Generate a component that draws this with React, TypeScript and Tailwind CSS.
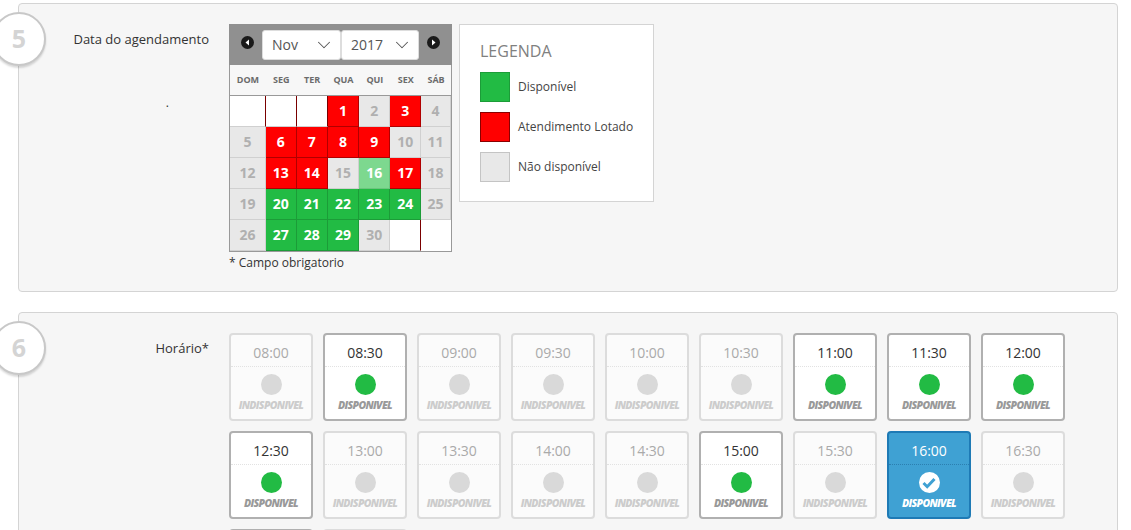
import React from 'react';
import { ChevronDown } from 'lucide-react';

type Day = { n?: number; s: 'e' | 'x' | 'n' | 'r' | 'g' | 'l' };

const weekDays = ['DOM', 'SEG', 'TER', 'QUA', 'QUI', 'SEX', 'SÁB'];
const colWidths = ['w-[36px]', 'w-[31px]', 'w-[31px]', 'w-[32px]', 'w-[31px]', 'w-[31px]', 'w-[30px]'];

const weeks: Day[][] = [
  [{ s: 'e' }, { s: 'e' }, { s: 'e' }, { n: 1, s: 'r' }, { n: 2, s: 'n' }, { n: 3, s: 'r' }, { n: 4, s: 'n' }],
  [{ n: 5, s: 'n' }, { n: 6, s: 'r' }, { n: 7, s: 'r' }, { n: 8, s: 'r' }, { n: 9, s: 'r' }, { n: 10, s: 'n' }, { n: 11, s: 'n' }],
  [{ n: 12, s: 'n' }, { n: 13, s: 'r' }, { n: 14, s: 'r' }, { n: 15, s: 'n' }, { n: 16, s: 'l' }, { n: 17, s: 'r' }, { n: 18, s: 'n' }],
  [{ n: 19, s: 'n' }, { n: 20, s: 'g' }, { n: 21, s: 'g' }, { n: 22, s: 'g' }, { n: 23, s: 'g' }, { n: 24, s: 'g' }, { n: 25, s: 'n' }],
  [{ n: 26, s: 'n' }, { n: 27, s: 'g' }, { n: 28, s: 'g' }, { n: 29, s: 'g' }, { n: 30, s: 'n' }, { s: 'e' }, { s: 'x' }],
];

const dayClass = {
  e: 'bg-white border-r border-r-[#7a0000] border-b border-b-[#d0d0d0]',
  x: 'bg-white',
  n: 'bg-[#e8e8e8] text-[#b0b0b0] border-r border-b border-[#d0d0d0]',
  r: 'bg-[#ff0000] text-white border-r border-b border-[#b00000]',
  g: 'bg-[#22bb44] text-white border-r border-b border-[#1c9c38]',
  l: 'bg-[#7dd88f] text-white border-r border-b border-[#6cc47e]',
};

const row1 = [
  ['08:00', 0], ['08:30', 1], ['09:00', 0], ['09:30', 0], ['10:00', 0], ['10:30', 0], ['11:00', 1], ['11:30', 1], ['12:00', 1],
] as [string, number][];
const row2 = [
  ['12:30', 1], ['13:00', 0], ['13:30', 0], ['14:00', 0], ['14:30', 0], ['15:00', 1], ['15:30', 0], ['16:00', 2], ['16:30', 0],
] as [string, number][];

const StepBadge = ({ n }: { n: number }) => (
  <div className="absolute left-[-27px] top-[8px] w-[54px] h-[54px] rounded-full bg-white border-2 border-[#c8c8c8] shadow-[0_2px_2px_rgba(0,0,0,0.15)] flex items-center justify-center text-[25px] font-bold text-[#d4d4d4]">
    {n}
  </div>
);

const SelectBox = ({ label, width }: { label: string; width: string }) => (
  <div className={`${width} h-[30px] bg-white rounded-[3px] border border-[#dddddd] flex items-center justify-between pl-[9px] pr-[5px] text-[14px] text-[#555555]`}>
    <span>{label}</span>
    <ChevronDown size={22} strokeWidth={1.1} />
  </div>
);

const NavArrow = ({ dir }: { dir: 'l' | 'r' }) => (
  <svg className="mb-[4px]" width="13" height="13" viewBox="0 0 13 13">
    <circle cx="6.5" cy="6.5" r="6.5" fill="#1a1a1a" />
    <path d={dir === 'l' ? 'M8 3.5v6L4.5 6.5z' : 'M5 3.5v6l3.5-3z'} fill="#ffffff" />
  </svg>
);

const Calendar = () => (
  <div className="w-[223px]">
    <div className="h-[41px] bg-[#909090] flex items-center justify-between px-[12px]">
      <NavArrow dir="l" />
      <div className="flex">
        <SelectBox label="Nov" width="w-[79px]" />
        <SelectBox label="2017" width="w-[78px]" />
      </div>
      <NavArrow dir="r" />
    </div>
    <div className="border-x border-b border-[#999999] bg-white">
      <div className="flex h-[31px] bg-[#f7f7f7] border-b border-[#999999]">
        {weekDays.map((d, i) => (
          <div key={d} className={`${colWidths[i]} flex items-center justify-center text-[9px] font-bold text-[#6b6b6b]`}>{d}</div>
        ))}
      </div>
      {weeks.map((w, i) => (
        <div key={i} className="flex h-[31px]">
          {w.map((d, j) => (
            <div key={j} className={`${colWidths[j]} ${dayClass[d.s]} pb-[1px] flex items-center justify-center text-[14px] font-bold`}>{d.n}</div>
          ))}
        </div>
      ))}
    </div>
    <p className="mt-[2px] text-[12px] text-[#333333]">* Campo obrigatorio</p>
  </div>
);

const Legend = () => (
  <div className="w-[195px] h-[178px] ml-[7px] bg-white border border-[#d4d4d4] pt-[16px] pl-[20px]">
    <div className="text-[16px] leading-[20px] text-[#808080]">LEGENDA</div>
    <div className="mt-[11px] flex flex-col gap-[10px] text-[12px] text-[#444444]">
      <div className="flex items-center gap-[8px]"><span className="w-[30px] h-[30px] bg-[#22bb44] border border-[#1c9c38]" />Disponível</div>
      <div className="flex items-center gap-[8px]"><span className="w-[30px] h-[30px] bg-[#ff0000] border border-[#8a0000]" />Atendimento Lotado</div>
      <div className="flex items-center gap-[8px]"><span className="w-[30px] h-[30px] bg-[#e8e8e8] border border-[#c4c4c4]" />Não disponível</div>
    </div>
  </div>
);

const SlotCard = ({ time, state }: { time: string; state: number }) => {
  const off = state === 0;
  const sel = state === 2;
  const box = sel ? 'bg-[#3fa1d3] border-[#1e7ab5]' : off ? 'bg-[#fbfbfb] border-[#dcdcdc]' : 'bg-white border-[#b0b0b0]';
  const timeColor = sel ? 'text-white' : off ? 'text-[#aaaaaa]' : 'text-[#333333]';
  const labelColor = sel ? 'text-white' : off ? 'text-[#cccccc]' : 'text-[#999999]';
  const line = sel ? 'border-[#2c7fb0]' : 'border-[#e2e2e2]';
  return (
    <div className={`w-[84px] h-[88px] rounded-[4px] border-2 ${box} flex flex-col items-center`}>
      <div className={`w-full h-[32px] pt-[3px] flex items-center justify-center text-[14px] border-b border-dotted ${line} ${timeColor}`}>{time}</div>
      <div className={`mt-[7px] w-[21px] h-[21px] rounded-full flex items-center justify-center ${sel ? 'bg-white' : off ? 'bg-[#d9d9d9]' : 'bg-[#22bb44]'}`}>
        {sel && (
          <svg width="14" height="12" viewBox="0 0 14 12">
            <path d="M1.5 6l3.7 3.7 7.3-7.7" fill="none" stroke="#3fa1d3" strokeWidth="3" />
          </svg>
        )}
      </div>
      <div className={`mt-[4px] text-[10.5px] leading-[12px] font-extrabold italic tracking-[-0.7px] whitespace-nowrap ${labelColor}`}>
        {off ? 'INDISPONIVEL' : 'DISPONIVEL'}
      </div>
    </div>
  );
};

export default function App() {
  return (
    <div className="w-[1131px] h-[530px] overflow-hidden bg-white pt-[3px] pl-[18px] font-['Open_Sans',sans-serif]">
      <section className="relative w-[1100px] h-[289px] bg-[#f6f6f6] border border-[#d4d4d4] rounded-[4px] flex">
        <StepBadge n={5} />
        <div className="w-[192px] shrink-0 pr-[2px] pt-[26px] text-right text-[13px] leading-[18px] text-[#333333]">
          Data do agendamento
          <div className="mt-[46px] mr-[40px] text-[12px] leading-[18px]">.</div>
        </div>
        <div className="ml-[18px] mt-[20px] flex items-start">
          <Calendar />
          <Legend />
        </div>
      </section>

      <section className="relative mt-[20px] w-[1100px] h-[300px] bg-[#f6f6f6] border border-[#d4d4d4] rounded-[4px] flex">
        <StepBadge n={6} />
        <div className="w-[192px] shrink-0 pr-[2px] pt-[26px] text-right text-[13px] leading-[18px] text-[#333333]">Horário*</div>
        <div className="ml-[18px] mt-[20px] flex flex-col gap-[10px]">
          <div className="flex gap-[10px]">
            {row1.map(([t, s]) => <SlotCard key={t} time={t} state={s} />)}
          </div>
          <div className="flex gap-[10px]">
            {row2.map(([t, s]) => <SlotCard key={t} time={t} state={s} />)}
          </div>
          <div className="flex gap-[10px]">
            <div className="w-[84px] h-[88px] rounded-[4px] border-2 bg-white border-[#b0b0b0]" />
            <div className="w-[84px] h-[88px] rounded-[4px] border-2 bg-[#fbfbfb] border-[#dcdcdc]" />
          </div>
        </div>
      </section>
    </div>
  );
}
